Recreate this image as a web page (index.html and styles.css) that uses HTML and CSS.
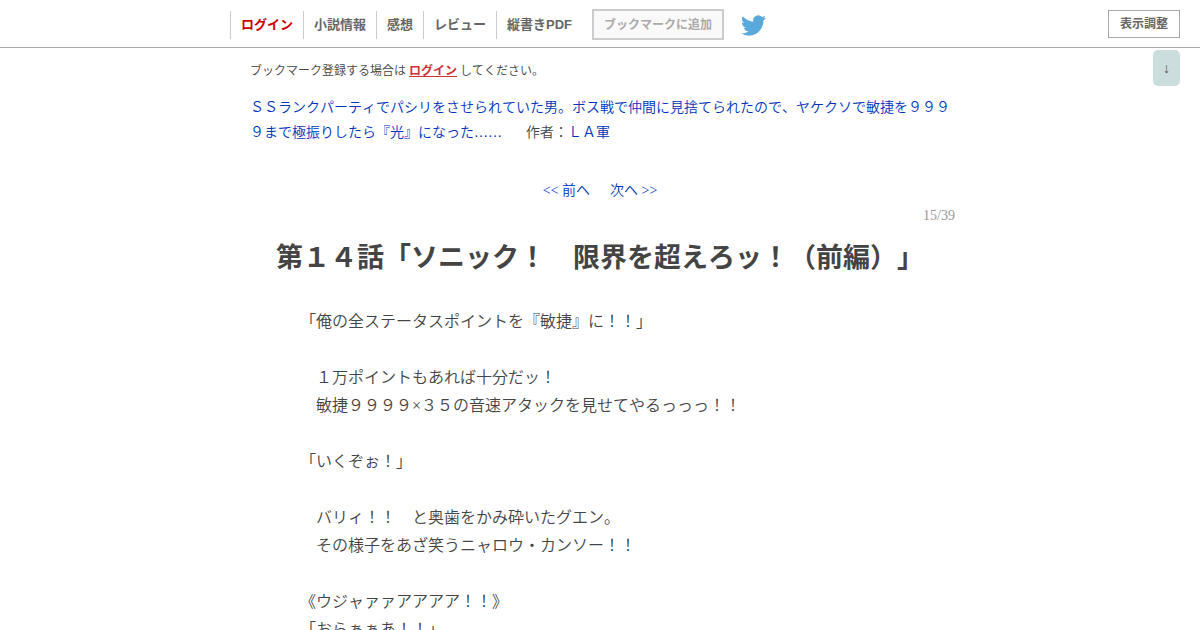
FILE: index.html
```html
<!DOCTYPE html>
<html lang="ja">
<head>
<meta charset="utf-8">
<title>第１４話「ソニック！　限界を超えろッ！（前編）」</title>
<link rel="stylesheet" href="styles.css">
</head>
<body>
<header class="header">
  <nav class="nav">
    <ul class="menu">
      <li><a class="login" href="#">ログイン</a></li>
      <li><a href="#">小説情報</a></li>
      <li><a href="#">感想</a></li>
      <li><a href="#">レビュー</a></li>
      <li><a href="#">縦書きPDF</a></li>
    </ul>
    <button class="bookmark" type="button" disabled>ブックマークに追加</button>
    <a class="twitter" href="#" aria-label="Twitter">
      <svg viewBox="0 0 24 24" width="25" height="25"><path fill="#5aa9dd" d="M23.95 4.57a10 10 0 0 1-2.82.77 4.96 4.96 0 0 0 2.16-2.72c-.95.55-2 .95-3.13 1.18a4.92 4.92 0 0 0-8.38 4.48C7.69 8.1 4.07 6.13 1.64 3.16a4.82 4.82 0 0 0-.67 2.48c0 1.71.87 3.21 2.19 4.1a4.9 4.9 0 0 1-2.23-.62v.06a4.92 4.92 0 0 0 3.95 4.83 5 5 0 0 1-2.21.08 4.94 4.94 0 0 0 4.6 3.42A9.87 9.87 0 0 1 0 19.54a13.99 13.99 0 0 0 7.56 2.21c9.05 0 14-7.5 14-13.98 0-.21 0-.42-.02-.63a9.94 9.94 0 0 0 2.46-2.55z"/></svg>
    </a>
  </nav>
  <button class="display" type="button">表示調整</button>
</header>
<button class="down" type="button" aria-label="下へ">↓</button>
<main class="container">
  <p class="notice">ブックマーク登録する場合は <a href="#">ログイン</a> してください。</p>
  <div class="work"><a href="#">ＳＳランクパーティでパシリをさせられていた男。ボス戦で仲間に見捨てられたので、ヤケクソで敏捷を９９９９まで極振りしたら『光』になった……</a><span class="author">作者：<a href="#">ＬＡ軍</a></span></div>
  <nav class="pager"><a href="#">&lt;&lt; 前へ</a><a href="#">次へ &gt;&gt;</a></nav>
  <div class="count">15/39</div>
  <h1 class="title">第１４話「ソニック！　限界を超えろッ！（前編）」</h1>
  <article class="story">
    <p>「俺の全ステータスポイントを『敏捷』に！！」</p>
    <p><br></p>
    <p>　１万ポイントもあれば十分だッ！</p>
    <p>　敏捷９９９９×３５の音速アタックを見せてやるっっっ！！</p>
    <p><br></p>
    <p>「いくぞぉ！」</p>
    <p><br></p>
    <p>　バリィ！！　と奥歯をかみ砕いたグエン。</p>
    <p>　その様子をあざ笑うニャロウ・カンソー！！</p>
    <p><br></p>
    <p>《ウジャァァアアアア！！》</p>
    <p>「おらぁぁあ！！」</p>
  </article>
</main>
</body>
</html>
```
FILE: styles.css
```css
* { box-sizing: border-box; }
html { overflow: hidden; }
body {
  margin: 0;
  color: #444;
  background: #fff;
  font-family: "Liberation Serif", "Noto Sans CJK JP", serif;
  font-size: 14px;
  font-weight: 350;
  font-kerning: none;
  text-spacing-trim: space-all;
}
a { color: #03b; text-decoration: none; }
p, ul { margin: 0; padding: 0; }
.header {
  position: fixed;
  top: 0;
  left: 0;
  right: 0;
  display: flex;
  align-items: flex-start;
  justify-content: space-between;
  height: 48px;
  padding: 9px 20px 0 230px;
  border-bottom: 1px solid #aaa;
  background: #fff;
  font-family: "Liberation Sans", "Noto Sans CJK JP", sans-serif;
}
.nav { display: flex; align-items: flex-start; }
.menu { display: flex; padding-top: 2px; list-style: none; }
.menu li { border-left: 1px solid #ccc; }
.menu a {
  display: block;
  padding: 0 10px;
  color: #666;
  font-size: 13px;
  font-weight: bold;
  line-height: 28px;
}
.menu .login { color: #c00; }
.bookmark {
  height: 31px;
  margin-left: 10px;
  padding: 0 10px 2px;
  border: 2px solid #ccc;
  color: #aaa;
  background: #f9f9f9;
  font: bold 12px "Liberation Sans", "Noto Sans CJK JP", sans-serif;
}
.twitter { display: block; margin: 4px 0 0 17px; }
.twitter svg { display: block; }
.display {
  height: 28px;
  margin-top: 1px;
  padding: 0 11px 4px;
  border: 1px solid #aaa;
  color: #666;
  background: #fff;
  font: bold 12px "Liberation Sans", "Noto Sans CJK JP", sans-serif;
}
.down {
  position: fixed;
  top: 50px;
  right: 20px;
  width: 27px;
  height: 36px;
  padding: 2px 0 0;
  border: 0;
  border-radius: 5px;
  color: #555;
  background: #cdd;
  font: 14px "Liberation Serif", serif;
}
.container { max-width: 730px; margin: 0 auto; padding: 61px 10px 0 15px; }
.notice { font-size: 12px; line-height: 20px; }
.notice a { color: #c33; font-weight: bold; text-decoration: underline; }
.work { margin-top: 14px; padding-right: 5px; line-height: 25px; }
.author { margin-left: 24px; }
.pager { display: flex; justify-content: center; gap: 20px; margin-top: 35px; padding-right: 5px; line-height: 21px; }
.count { margin-top: 4px; color: #999; text-align: right; line-height: 21px; }
.title { margin: 15px 0 0; padding-right: 5px; font-size: 27px; line-height: 34px; text-align: center; }
.story { margin-top: 33px; padding: 0 55px 0 50px; font-size: 16px; line-height: 28px; }
```
